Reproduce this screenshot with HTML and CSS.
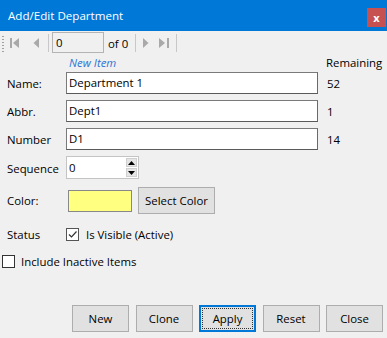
FILE: index.html
```html
<!DOCTYPE html>
<html>
<head>
<meta charset="utf-8">
<link rel="stylesheet" href="styles.css">
</head>
<body>
<div class="window">
  <div class="titlebar">
    <span class="title">Add/Edit Department</span>
    <span class="close">x</span>
  </div>
  <div class="toolbar">
    <span class="grip"></span>
    <span class="tb-btn first"><svg width="10" height="10" viewBox="0 0 10 10"><rect x="0" y="0" width="2" height="10" fill="#a9a9a9"/><path d="M9 0 L3 5 L9 10 Z" fill="#a9a9a9"/></svg></span>
    <span class="tb-btn prev"><svg width="6" height="10" viewBox="0 0 6 10"><path d="M6 0 L0.5 5 L6 10 Z" fill="#a9a9a9"/></svg></span>
    <span class="sep"></span>
    <span class="pos">0</span>
    <span class="of">of 0</span>
    <span class="sep"></span>
    <span class="tb-btn next"><svg width="6" height="10" viewBox="0 0 6 10"><path d="M0 0 L5.5 5 L0 10 Z" fill="#a9a9a9"/></svg></span>
    <span class="tb-btn last"><svg width="10" height="10" viewBox="0 0 10 10"><path d="M0 0 L6 5 L0 10 Z" fill="#a9a9a9"/><rect x="8" y="0" width="2" height="10" fill="#a9a9a9"/></svg></span>
    <span class="sep"></span>
  </div>
  <div class="form">
    <span class="head-cell"></span>
    <span class="head-cell newitem">New Item</span>
    <span class="head-cell remaining">Remaining</span>

    <span class="label">Name:</span>
    <span class="textbox">Department 1</span>
    <span class="count">52</span>

    <span class="label">Abbr.</span>
    <span class="textbox">Dept1</span>
    <span class="count">1</span>

    <span class="label">Number</span>
    <span class="textbox">D1</span>
    <span class="count">14</span>

    <span class="label">Sequence</span>
    <span class="spinner-cell">
      <span class="spinner">
        <span class="spin-value">0</span>
        <span class="spin-btns">
          <span class="spin-btn"><svg width="7" height="4" viewBox="0 0 7 4"><path d="M0 4 L3.5 0 L7 4 Z" fill="#000"/></svg></span>
          <span class="spin-btn"><svg width="7" height="4" viewBox="0 0 7 4"><path d="M0 0 L3.5 4 L7 0 Z" fill="#000"/></svg></span>
        </span>
      </span>
    </span>
    <span></span>

    <span class="label color-label">Color:</span>
    <span class="color-cell">
      <span class="swatch"></span>
      <span class="btn select-color">Select Color</span>
    </span>
    <span></span>

    <span class="label status-label">Status</span>
    <span class="check-cell">
      <span class="checkbox checked"><svg width="11" height="11" viewBox="0 0 11 11"><path d="M2 5.5 L4.5 8 L9.5 2.5" fill="none" stroke="#333" stroke-width="1.2"/></svg></span>
      <span class="check-text">Is Visible (Active)</span>
    </span>
    <span></span>
  </div>
  <div class="inactive">
    <span class="checkbox"></span>
    <span class="check-text">Include Inactive Items</span>
  </div>
  <div class="buttons">
    <span class="btn action">New</span>
    <span class="btn action">Clone</span>
    <span class="btn action focused">Apply</span>
    <span class="btn action">Reset</span>
    <span class="btn action">Close</span>
  </div>
</div>
</body>
</html>
```

FILE: styles.css
```css
html, body {
  margin: 0;
  padding: 0;
}
body {
  background: #f0f0f0;
  font-family: "Open Sans", "Noto Sans", sans-serif;
  font-size: 11.4px;
  color: #000;
}
.window {
  width: 387px;
  height: 338px;
  display: flex;
  flex-direction: column;
  background: #f0f0f0;
  overflow: hidden;
}
.titlebar {
  height: 31px;
  flex: none;
  background: #0078d7;
  display: flex;
  align-items: center;
  padding-left: 8px;
  padding-right: 1px;
  box-sizing: border-box;
}
.title {
  color: #fff;
  font-size: 11.6px;
  flex: 1;
  margin-top: -1px;
}
.close {
  width: 19px;
  height: 19px;
  margin-top: 3px;
  background: #c75050;
  color: #fff;
  font-weight: bold;
  font-size: 11px;
  display: flex;
  align-items: center;
  justify-content: center;
  line-height: 1;
}
.toolbar {
  height: 24px;
  flex: none;
  display: flex;
  align-items: center;
  padding-left: 2px;
  box-sizing: border-box;
}
.grip {
  width: 2px;
  height: 17px;
  background-image: radial-gradient(circle, #a0a0a0 0.8px, transparent 1px);
  background-size: 2px 3px;
  margin-right: 6px;
}
.tb-btn {
  display: flex;
  align-items: center;
  justify-content: center;
  height: 20px;
}
.first { width: 10px; margin-left: 0; margin-right: 13px; }
.prev { width: 6px; margin-right: 9px; }
.next { width: 6px; margin-left: 7px; margin-right: 10px; }
.last { width: 10px; margin-right: 7px; }
.sep {
  width: 1px;
  height: 18px;
  background: #c8c8c8;
}
.pos {
  width: 52px;
  height: 21px;
  box-sizing: border-box;
  border: 1px solid #b4b4b4;
  background: #f0f0f0;
  margin-left: 3px;
  padding-left: 3px;
  line-height: 19px;
  margin-top: -2px;
}
.of {
  margin-left: 4px;
  margin-right: 7px;
}
.form {
  display: grid;
  grid-template-columns: 66px 252px 1fr;
  align-items: center;
  margin-top: 0;
}
.head-cell {
  height: 17px;
  line-height: 15px;
}
.newitem {
  color: #2d74d6;
  font-style: italic;
  padding-left: 3px;
}
.remaining {
  padding-left: 8px;
  white-space: nowrap;
}
.label {
  padding-left: 7px;
  white-space: nowrap;
  margin-bottom: 6px;
}
.textbox {
  height: 22px;
  box-sizing: border-box;
  border: 1px solid #7a7a7a;
  border-right-color: #6a6a6a;
  border-bottom-color: #5a5a5a;
  background: #fff;
  padding-left: 2px;
  line-height: 20px;
  margin-bottom: 6px;
}
.count {
  padding-left: 9px;
  margin-bottom: 6px;
}
.spinner-cell {
  margin-bottom: 8px;
}
.spinner {
  display: flex;
  width: 73px;
  height: 23px;
  box-sizing: border-box;
  border: 1px solid #c4c4c4;
  background: #fff;
}
.spin-value {
  flex: 1;
  padding-left: 2px;
  line-height: 21px;
}
.spin-btns {
  width: 12px;
  display: flex;
  flex-direction: column;
  padding: 1px 1px 1px 0;
  gap: 1px;
  box-sizing: border-box;
}
.spin-btn {
  flex: 1;
  background: #e5e5e5;
  border: 1px solid #d0d0d0;
  display: flex;
  align-items: center;
  justify-content: center;
}
.color-label { margin-bottom: 12px; }
.color-cell {
  display: flex;
  align-items: center;
  gap: 6px;
  padding-left: 2px;
  margin-bottom: 12px;
}
.swatch {
  width: 64px;
  height: 22px;
  box-sizing: border-box;
  background: #ffff80;
  border: 1px solid #888;
}
.btn {
  box-sizing: border-box;
  background: #e1e1e1;
  border: 1px solid #adadad;
  display: flex;
  align-items: center;
  justify-content: center;
  white-space: nowrap;
}
.select-color {
  width: 77px;
  height: 27px;
}
.status-label { margin-bottom: 0; }
.check-cell {
  display: flex;
  align-items: center;
  height: 17px;
}
.checkbox {
  width: 13px;
  height: 13px;
  box-sizing: border-box;
  border: 1px solid #333;
  background: #fff;
  display: flex;
  align-items: center;
  justify-content: center;
  flex: none;
}
.checkbox.checked {
  border-color: #555;
}
.check-text {
  margin-left: 6px;
  white-space: nowrap;
}
.check-cell .check-text { margin-left: 7px; }
.inactive {
  display: flex;
  align-items: center;
  height: 17px;
  margin-top: 10px;
  padding-left: 2px;
}
.buttons {
  margin-top: auto;
  display: flex;
  justify-content: flex-end;
  gap: 6.5px;
  padding-right: 4px;
  padding-bottom: 6px;
}
.action {
  width: 57px;
  height: 27px;
}
.focused {
  border-color: #0078d7;
  box-shadow: inset 0 0 0 1px #0078d7;
  position: relative;
}
.focused::after {
  content: "";
  position: absolute;
  left: 2px;
  top: 2px;
  right: 2px;
  bottom: 2px;
  border: 1px dotted #333;
}
```
